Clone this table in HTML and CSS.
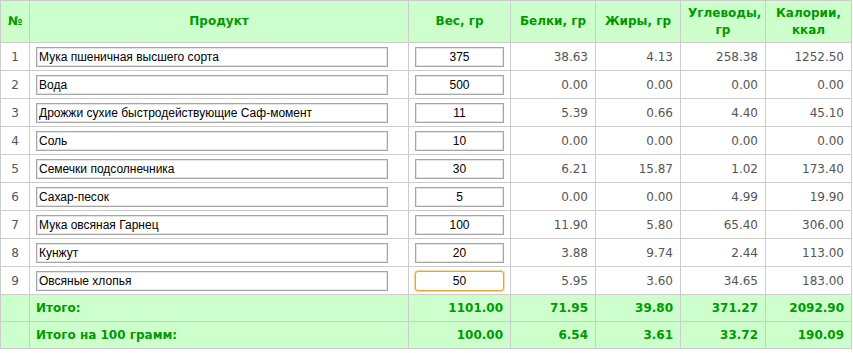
FILE: index.html
```html
<!DOCTYPE html>
<html>
<head>
<meta charset="utf-8">
<link rel="stylesheet" href="styles.css">
</head>
<body>
<table class="calc">
  <colgroup>
    <col class="c-num"><col class="c-prod"><col class="c-w"><col class="c-v"><col class="c-v"><col class="c-v"><col class="c-k">
  </colgroup>
  <thead>
    <tr>
      <th>№</th><th>Продукт</th><th>Вес, гр</th><th>Белки, гр</th><th>Жиры, гр</th><th>Углеводы, гр</th><th>Калории, ккал</th>
    </tr>
  </thead>
  <tbody>
    <tr><td class="num">1</td><td class="in"><input class="prod" value="Мука пшеничная высшего сорта"></td><td class="in"><input class="wt" value="375"></td><td class="val">38.63</td><td class="val">4.13</td><td class="val">258.38</td><td class="val">1252.50</td></tr>
    <tr><td class="num">2</td><td class="in"><input class="prod" value="Вода"></td><td class="in"><input class="wt" value="500"></td><td class="val">0.00</td><td class="val">0.00</td><td class="val">0.00</td><td class="val">0.00</td></tr>
    <tr><td class="num">3</td><td class="in"><input class="prod" value="Дрожжи сухие быстродействующие Саф-момент"></td><td class="in"><input class="wt" value="11"></td><td class="val">5.39</td><td class="val">0.66</td><td class="val">4.40</td><td class="val">45.10</td></tr>
    <tr><td class="num">4</td><td class="in"><input class="prod" value="Соль"></td><td class="in"><input class="wt" value="10"></td><td class="val">0.00</td><td class="val">0.00</td><td class="val">0.00</td><td class="val">0.00</td></tr>
    <tr><td class="num">5</td><td class="in"><input class="prod" value="Семечки подсолнечника"></td><td class="in"><input class="wt" value="30"></td><td class="val">6.21</td><td class="val">15.87</td><td class="val">1.02</td><td class="val">173.40</td></tr>
    <tr><td class="num">6</td><td class="in"><input class="prod" value="Сахар-песок"></td><td class="in"><input class="wt" value="5"></td><td class="val">0.00</td><td class="val">0.00</td><td class="val">4.99</td><td class="val">19.90</td></tr>
    <tr><td class="num">7</td><td class="in"><input class="prod" value="Мука овсяная Гарнец"></td><td class="in"><input class="wt" value="100"></td><td class="val">11.90</td><td class="val">5.80</td><td class="val">65.40</td><td class="val">306.00</td></tr>
    <tr><td class="num">8</td><td class="in"><input class="prod" value="Кунжут"></td><td class="in"><input class="wt" value="20"></td><td class="val">3.88</td><td class="val">9.74</td><td class="val">2.44</td><td class="val">113.00</td></tr>
    <tr><td class="num">9</td><td class="in"><input class="prod" value="Овсяные хлопья"></td><td class="in"><input class="wt focus" value="50"></td><td class="val">5.95</td><td class="val">3.60</td><td class="val">34.65</td><td class="val">183.00</td></tr>
  </tbody>
  <tfoot>
    <tr><td></td><td class="lbl">Итого:</td><td class="val">1101.00</td><td class="val">71.95</td><td class="val">39.80</td><td class="val">371.27</td><td class="val">2092.90</td></tr>
    <tr><td></td><td class="lbl">Итого на 100 грамм:</td><td class="val">100.00</td><td class="val">6.54</td><td class="val">3.61</td><td class="val">33.72</td><td class="val">190.09</td></tr>
  </tfoot>
</table>
</body>
</html>
```

FILE: styles.css
```css
html, body {
  margin: 0;
  padding: 0;
  background: #fff;
}
.calc {
  border-collapse: collapse;
  table-layout: fixed;
  width: 851px;
  font-family: "DejaVu Sans", Verdana, sans-serif;
  font-size: 12px;
  color: #555;
}
.c-num { width: 29px; }
.c-prod { width: 379px; }
.c-w { width: 102px; }
.c-v { width: 85px; }
.c-k { width: 86px; }
.calc th, .calc td {
  border: 1px solid #cccccc;
  padding: 0 7px;
}
.calc th {
  background: #ccffcc;
  color: #009900;
  font-weight: bold;
  height: 41px;
  text-align: center;
  line-height: 17px;
}
.calc tbody td {
  height: 27px;
}
.calc tfoot td {
  height: 26px;
  background: #ccffcc;
  color: #009900;
  font-weight: bold;
}
.calc .num {
  text-align: center;
  padding: 0;
}
.calc .val {
  text-align: right;
}
.calc .lbl {
  text-align: left;
  padding-left: 6px;
}
.calc .in {
  padding: 0 6px;
}
input {
  font-family: "Liberation Sans", Arial, sans-serif;
  font-size: 12px;
  color: #000;
  height: 20px;
  box-sizing: border-box;
  border: 1px solid #a6a6a6;
  box-shadow: inset 0 0 0 1px #e4e4e4;
  padding: 0 2px;
  margin: 0;
  display: block;
  background: #fff;
  outline: none;
}
.prod {
  width: 352px;
}
.wt {
  width: 89px;
  text-align: center;
}
.wt.focus {
  border: 1px solid #e5a33c;
  border-radius: 3px;
  box-shadow: 0 0 1px 1px #f6d79a;
}
```
